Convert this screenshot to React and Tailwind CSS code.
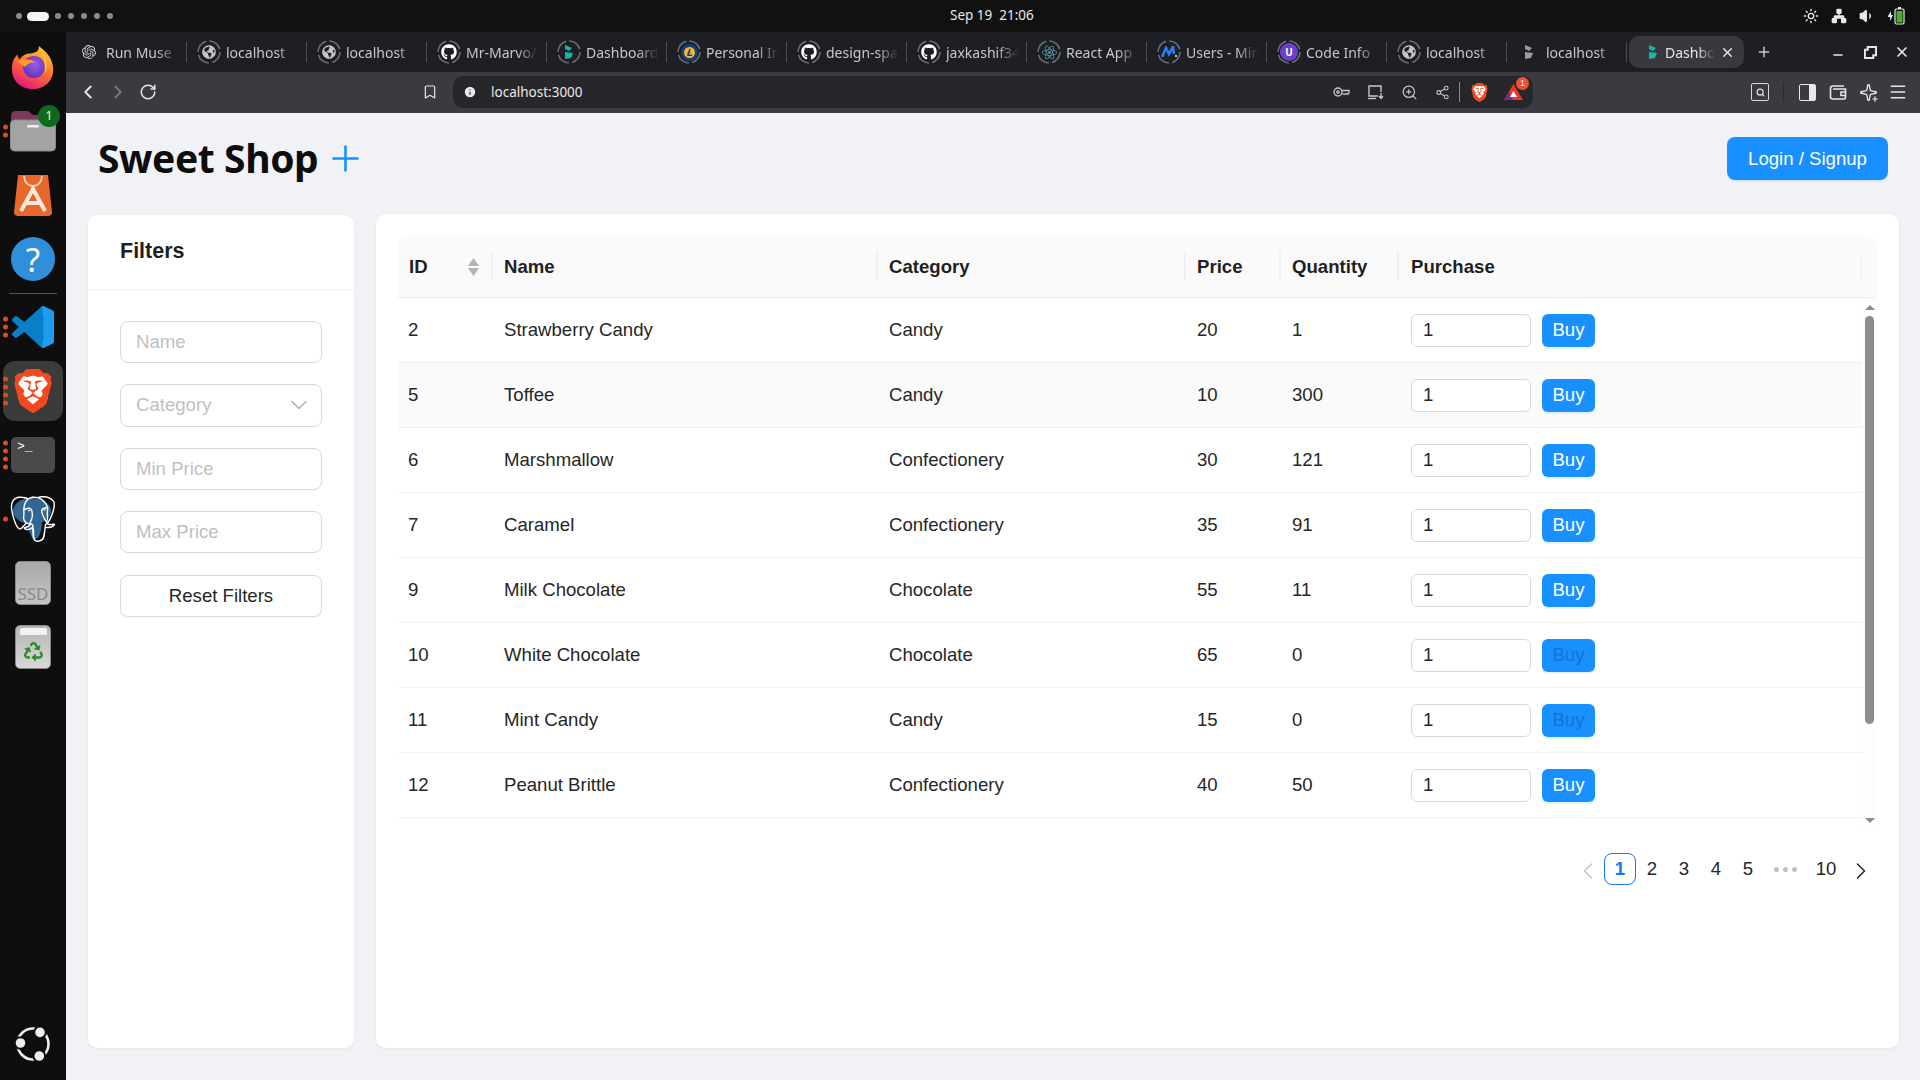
import {
  ChevronLeft,
  ChevronRight,
  ChevronDown,
  RotateCw,
  Bookmark,
  Info,
  ZoomIn,
  Share2,
  Plus,
  X,
  Minus,
  Sparkle,
  Menu,
  Volume1,
  Sun,
  Network,
  Search,
} from "lucide-react";
import { FaGithub, FaGlobeAmericas, FaRecycle } from "react-icons/fa";
import { SiBrave, SiOpenai, SiReact, SiPostgresql, SiLitecoin } from "react-icons/si";

const rows = [
  { id: 2, name: "Strawberry Candy", category: "Candy", price: 20, qty: 1 },
  { id: 5, name: "Toffee", category: "Candy", price: 10, qty: 300, hover: true },
  { id: 6, name: "Marshmallow", category: "Confectionery", price: 30, qty: 121 },
  { id: 7, name: "Caramel", category: "Confectionery", price: 35, qty: 91 },
  { id: 9, name: "Milk Chocolate", category: "Chocolate", price: 55, qty: 11 },
  { id: 10, name: "White Chocolate", category: "Chocolate", price: 65, qty: 0 },
  { id: 11, name: "Mint Candy", category: "Candy", price: 15, qty: 0 },
  { id: 12, name: "Peanut Brittle", category: "Confectionery", price: 40, qty: 50 },
];

const GlobeIcon = () => <FaGlobeAmericas className="text-[14px] text-[#c4c5c8]" />;
const GitIcon = () => <FaGithub className="text-[16px] text-white" />;
const DashIcon = ({ color = "#14b8a6" }) => (
  <svg width="12" height="16" viewBox="0 0 12 16">
    <path d="M2 1 L9 4 L6 7 L2 5 Z" fill={color} />
    <path d="M2 8 L10 9 L8 14 L2 15 Z" fill={color} />
  </svg>
);

const tabs = [
  { title: "Run Muse", icon: <SiOpenai className="text-[14px] text-[#d0d0d0]" />, plain: true },
  { title: "localhost", icon: <GlobeIcon /> },
  { title: "localhost", icon: <GlobeIcon /> },
  { title: "Mr-Marvo/", icon: <GitIcon /> },
  { title: "Dashboard", icon: <DashIcon /> },
  {
    title: "Personal In",
    icon: (
      <span className="flex h-[17px] w-[17px] items-center justify-center rounded-full bg-[#12407a]">
        <SiLitecoin className="text-[11px] text-[#f5b83d]" />
      </span>
    ),
  },
  { title: "design-spa", icon: <GitIcon /> },
  { title: "jaxkashif34", icon: <GitIcon /> },
  { title: "React App", icon: <SiReact className="text-[15px] text-[#4fa3b8]" /> },
  {
    title: "Users - Min",
    icon: (
      <svg width="16" height="12" viewBox="0 0 16 12">
        <path d="M1 11 L5 2 L8 8 L12 1 L13 8" fill="none" stroke="#2f7cf6" strokeWidth="2.6" />
        <circle cx="15" cy="10" r="1" fill="#fff" />
      </svg>
    ),
  },
  {
    title: "Code Info",
    icon: (
      <span className="flex h-[18px] w-[18px] items-center justify-center rounded-full bg-[#6d3fd1] text-[10px] font-bold text-white">
        U
      </span>
    ),
  },
  { title: "localhost", icon: <GlobeIcon /> },
  { title: "localhost", icon: <DashIcon color="#9a9a9a" />, plain: true },
];

const Ring = ({ children, plain }) => (
  <span className="relative flex h-6 w-6 shrink-0 items-center justify-center">
    {!plain && (
      <svg className="absolute inset-0" viewBox="0 0 24 24" fill="none">
        <circle cx="12" cy="12" r="11" stroke="#6b6c70" strokeWidth="1.6" strokeDasharray="14 3.3" />
      </svg>
    )}
    {children}
  </span>
);

const Tab = ({ title, icon, plain }) => (
  <div className="flex h-[40px] w-[120px] shrink-0 items-center gap-[5px] pl-[10px]">
    <Ring plain={plain}>{icon}</Ring>
    <span className="w-[73px] overflow-hidden whitespace-nowrap text-[14px] text-[#c6c7ca] [mask-image:linear-gradient(to_right,black_70%,transparent_100%)]">
      {title}
    </span>
    <span className="ml-auto h-[20px] w-px shrink-0 bg-[#4a4b50]" />
  </div>
);

const Firefox = () => (
  <svg width="46" height="46" viewBox="0 0 48 48">
    <defs>
      <linearGradient id="ffOuter" x1="0.8" y1="0" x2="0.3" y2="1">
        <stop offset="0" stopColor="#ffd53a" />
        <stop offset="0.45" stopColor="#ff7a2a" />
        <stop offset="1" stopColor="#e6157e" />
      </linearGradient>
      <radialGradient id="ffInner" cx="0.55" cy="0.4" r="0.7">
        <stop offset="0" stopColor="#9a5cf0" />
        <stop offset="1" stopColor="#5b2bb0" />
      </radialGradient>
    </defs>
    <path
      d="M30 2 C38 8 44 14 45 25 C46 38 36 47 24 47 C11 47 2 38 2 26 C2 20 4 14 8 11 C8 14 9 15 10 16 C13 12 16 10 21 10 C26 9 31 8 30 2 Z"
      fill="url(#ffOuter)"
    />
    <circle cx="25" cy="24" r="11.5" fill="url(#ffInner)" />
    <path d="M8 18 C14 16 22 15 26 19 C20 19 17 22 16 24 C13 22 10 21 8 18 Z" fill="#ff9a2e" />
    <path d="M33 9 C39 14 40 23 36 31 C37 22 36 15 33 9 Z" fill="#ffc53a" />
  </svg>
);

const Folder = () => (
  <svg width="46" height="42" viewBox="0 0 46 42">
    <path d="M1 6 Q1 1 6 1 H18 L23 5 H40 Q45 5 45 10 V20 H1 Z" fill="#7b3a55" />
    <rect x="0.5" y="10" width="45" height="31" rx="4" fill="#a3a3a3" />
    <rect x="0.5" y="10" width="45" height="31" rx="4" fill="none" stroke="#8a8a8a" />
    <rect x="17" y="15" width="12" height="2.5" rx="1.2" fill="#eeeeee" />
  </svg>
);

const Store = () => (
  <svg width="38" height="43" viewBox="0 0 38 43">
    <path d="M4 1 H34 L38 38 Q38 42 34 42 H4 Q0 42 0 38 Z" fill="#e9672c" />
    <path d="M10 2 Q11 12 19 12 Q27 12 28 2" fill="none" stroke="#f4d5c5" strokeWidth="1.8" />
    <path d="M7 37 L19 15 L31 37 M10 29 H28" fill="none" stroke="#fbe8de" strokeWidth="4" />
  </svg>
);

const VsCode = () => (
  <svg width="42" height="42" viewBox="0 0 100 100">
    <path
      d="M70.9 99.3a6.2 6.2 0 0 0 4.96-.19l20.6-9.9A6.25 6.25 0 0 0 100 83.58V16.42a6.25 6.25 0 0 0-3.54-5.63L75.86.88a6.23 6.23 0 0 0-7.1 1.21L29.35 38.04 12.18 25.01a4.16 4.16 0 0 0-5.32.24L1.36 30.25a4.17 4.17 0 0 0 0 6.16L16.25 50 1.36 63.59a4.17 4.17 0 0 0 0 6.16l5.5 5a4.16 4.16 0 0 0 5.32.24l17.17-13.03 39.41 35.95a6.2 6.2 0 0 0 2.14 1.39ZM75 27.3 45.1 50 75 72.7V27.3Z"
      fill="#0a7fc8"
    />
    <path
      d="M70.9 99.3a6.2 6.2 0 0 0 4.96-.19l20.6-9.9A6.25 6.25 0 0 0 100 83.58V16.42a6.25 6.25 0 0 0-3.54-5.63L75.86.88A6.2 6.2 0 0 0 70.9.7L75 27.3V72.7Z"
      fill="#1f9cf0"
    />
  </svg>
);

const Brave = ({ size }) => (
  <span className="relative flex items-center justify-center" style={{ width: size, height: size }}>
    <span className="absolute left-[15%] top-[12%] h-[70%] w-[70%] rounded-[30%] bg-white" />
    <SiBrave className="relative text-[#f4481f]" style={{ fontSize: size }} />
  </span>
);

const Elephant = () => (
  <span className="relative flex h-[48px] w-[46px] items-center justify-center">
    <span className="absolute left-[3px] top-[3px] h-[26px] w-[38px] rounded-[50%] bg-[#336791]" />
    <span className="absolute left-[18px] top-[10px] h-[34px] w-[14px] rounded-[50%] bg-[#336791]" />
    <SiPostgresql className="relative text-[48px] text-white" />
  </span>
);

const KeyIcon = () => (
  <svg width="17" height="12" viewBox="0 0 17 12" fill="none" stroke="#c6c7ca" strokeWidth="1.3">
    <circle cx="5" cy="6" r="4" />
    <circle cx="5" cy="6" r="1.2" />
    <path d="M9 4.5 H16 V7 L14.5 8.5 L13 7.5 L11.5 8.5 L9 7.5" />
  </svg>
);

const CastIcon = () => (
  <svg width="18" height="16" viewBox="0 0 18 16" fill="none" stroke="#c6c7ca" strokeWidth="1.4">
    <path d="M11 12 H2 V2 H14 V8" />
    <path d="M1 14.5 H9" />
    <path d="M14 9 V14 M12 12 L14 14.5 L16 12" />
  </svg>
);

const WalletIcon = () => (
  <svg width="18" height="18" viewBox="0 0 18 18" fill="none" stroke="#e8e8e8" strokeWidth="1.6">
    <path d="M15 3 H4 Q1.5 3 1.5 5.5 V14 Q1.5 16 4 16 H15 Q16.5 16 16.5 14 V6 H4" />
    <path d="M16.5 9 H12 V12.5 H16.5" />
  </svg>
);

const DockSlot = ({ running = 0, children }) => (
  <div className="relative flex h-[64px] w-[66px] items-center justify-center">
    {children}
    {running > 0 && (
      <div className="absolute left-[3px] top-1/2 flex -translate-y-1/2 flex-col gap-[3px]">
        {Array.from({ length: running }).map((_, i) => (
          <span key={i} className="h-[5px] w-[5px] rounded-full bg-[#d4501c]" />
        ))}
      </div>
    )}
  </div>
);

const Dock = () => (
  <aside className="flex w-[66px] shrink-0 flex-col bg-[#0e0e0e] pt-[3px]">
    <DockSlot>
      <Firefox />
    </DockSlot>
    <DockSlot running={2}>
      <Folder />
      <span className="absolute left-[38px] top-[6px] flex h-[22px] w-[22px] items-center justify-center rounded-full bg-[#0f6a1e] font-['Noto_Sans',sans-serif] text-[13px] text-[#f1f1c0]">
        1
      </span>
    </DockSlot>
    <DockSlot>
      <Store />
    </DockSlot>
    <DockSlot>
      <span className="flex h-[44px] w-[44px] items-center justify-center rounded-full bg-[#2f8fdb] font-['Noto_Sans',sans-serif] text-[33px] leading-none text-white">
        ?
      </span>
    </DockSlot>
    <div className="mx-[9px] mt-[2px] mb-px h-px bg-[#555555]" />
    <DockSlot running={3}>
      <VsCode />
    </DockSlot>
    <DockSlot running={4}>
      <span className="absolute left-[3px] top-[2px] h-[60px] w-[60px] rounded-[12px] bg-[#3b3b3b]" />
      <span className="relative">
        <Brave size={44} />
      </span>
    </DockSlot>
    <DockSlot running={4}>
      <div className="h-[36px] w-[44px] rounded-[5px] bg-[#4a4a4a] pl-[6px] font-['Liberation_Mono',monospace] text-[13px] leading-[20px] text-white">
        {">_"}
      </div>
    </DockSlot>
    <DockSlot running={1}>
      <Elephant />
    </DockSlot>
    <DockSlot>
      <div className="flex h-[44px] w-[36px] items-end justify-center rounded-[5px] border border-[#8a8a8a] bg-gradient-to-b from-[#a9a9a9] to-[#c4c4c4] pb-[2px] font-['Noto_Sans',sans-serif] text-[17px] leading-none text-[#8a8a8a]">
        SSD
      </div>
    </DockSlot>
    <DockSlot>
      <div className="flex h-[44px] w-[36px] flex-col items-center rounded-[5px] border border-[#8a8a8a] bg-gradient-to-b from-[#b5b5b5] to-[#d8d8d8]">
        <span className="mt-[2px] h-[7px] w-[27px] rounded-t-[2px] bg-[#f2f2f2]" />
        <FaRecycle className="mt-[7px] text-[19px] text-[#2d8a2d]" />
      </div>
    </DockSlot>
    <div className="mt-auto mb-[18px] flex justify-center">
      <svg width="36" height="36" viewBox="0 0 36 36" fill="none">
        <circle cx="18" cy="18" r="15.5" stroke="#eeeeee" strokeWidth="2.6" />
        <circle cx="5.5" cy="17" r="5.8" fill="#eeeeee" stroke="#0e0e0e" strokeWidth="2" />
        <circle cx="25" cy="6.4" r="5.8" fill="#eeeeee" stroke="#0e0e0e" strokeWidth="2" />
        <circle cx="24.3" cy="30" r="5.8" fill="#eeeeee" stroke="#0e0e0e" strokeWidth="2" />
      </svg>
    </div>
  </aside>
);

const TopBar = () => (
  <div className="relative flex h-[32px] shrink-0 items-center justify-between bg-[#111111] pl-[16px] pr-[15px]">
    <div className="flex items-center gap-[5px]">
      <span className="h-[6px] w-[6px] rounded-full bg-[#8c8c8c]" />
      <span className="h-[9px] w-[22px] rounded-full bg-[#f5f5f5]" />
      {[0, 1, 2, 3, 4].map((i) => (
        <span key={i} className="mx-[1px] h-[6px] w-[6px] rounded-full bg-[#8c8c8c]" />
      ))}
    </div>
    <div className="absolute left-[950px] top-[5px] whitespace-pre font-['Noto_Sans',sans-serif] text-[13.5px] text-[#e8e8e8]">
      Sep 19  21:06
    </div>
    <div className="flex items-center gap-[12px] text-[#e8e8e8]">
      <Sun size={16} />
      <Network size={16} fill="#e8e8e8" />
      <Volume1 size={16} fill="#e8e8e8" />
      <svg width="18" height="20" viewBox="0 0 18 20">
        <path d="M1 10 L4 5 V9 H6 L3 15 V11 H1 Z" fill="#e8e8e8" />
        <rect x="8" y="3" width="9" height="15" rx="1.5" fill="none" stroke="#e8e8e8" strokeWidth="1.2" />
        <rect x="11" y="1" width="3" height="2" fill="#e8e8e8" />
        <rect x="9.5" y="5" width="6" height="11.5" fill="#4caf2a" />
      </svg>
    </div>
  </div>
);

const TabBar = () => (
  <div className="flex h-[40px] shrink-0 items-center bg-[#1e1f24] pl-px font-['Noto_Sans',sans-serif]">
    {tabs.map((tab, i) => (
      <Tab key={i} {...tab} />
    ))}
    <div className="ml-[2px] flex h-[32px] w-[115px] shrink-0 items-center rounded-[10px] bg-[#38393f] pl-[12px]">
      <span className="flex w-[24px] justify-center">
        <DashIcon />
      </span>
      <span className="w-[50px] overflow-hidden whitespace-nowrap text-[14px] text-[#e6e6e6] [mask-image:linear-gradient(to_right,black_65%,transparent_100%)]">
        Dashboard
      </span>
      <X size={15} className="ml-[5px] text-[#e6e6e6]" strokeWidth={2.4} />
    </div>
    <Plus size={16} className="ml-[12px] text-[#c6c7ca]" strokeWidth={2.2} />
    <div className="ml-auto flex items-center gap-[17px] pr-[10px] text-[#e6e6e6]">
      <Minus size={14} strokeWidth={2.6} className="mr-[2px] mt-[6px]" />
      <svg width="13" height="13" viewBox="0 0 14 14">
        <path d="M4 1 H13 V10 H10 V13 H1 V4 H4 Z" fill="none" stroke="#e6e6e6" strokeWidth="2.2" />
      </svg>
      <X size={16} strokeWidth={2.6} />
    </div>
  </div>
);

const ToolBar = () => (
  <div className="flex h-[41px] shrink-0 items-center bg-[#3a3a40] pb-px pl-[11px] text-[#e8e8e8]">
    <ChevronLeft size={22} strokeWidth={2} />
    <ChevronRight size={22} strokeWidth={2} className="ml-[8px] text-[#77777c]" />
    <RotateCw size={18} strokeWidth={2} className="ml-[10px]" />
    <Bookmark size={16} strokeWidth={1.8} className="ml-[265px]" />
    <div className="ml-[15px] flex h-[32px] w-[1080px] items-center rounded-[10px] bg-[#26262b] pl-[10px]">
      <Info size={14} fill="#e8e8e8" stroke="#26262b" strokeWidth={2} />
      <span className="ml-[14px] font-['Noto_Sans',sans-serif] text-[13.5px]">localhost:3000</span>
      <div className="ml-auto flex items-center pr-[10px] text-[#c6c7ca]">
        <KeyIcon />
        <span className="ml-[17px]">
          <CastIcon />
        </span>
        <ZoomIn size={17} strokeWidth={1.7} className="ml-[16px]" />
        <Share2 size={15} strokeWidth={1.7} className="ml-[17px]" />
        <span className="ml-[9px] h-[20px] w-px bg-[#8a8a8a]" />
        <span className="ml-[10px]">
          <Brave size={19} />
        </span>
        <span className="relative ml-[15px] flex">
          <svg width="19" height="18" viewBox="0 0 19 18">
            <path d="M9.5 1 L19 17 H0 Z" fill="#e8392b" />
            <path d="M0 17 L5 9 L9 17 Z" fill="#7a2a90" />
            <path d="M9.5 8 L13 14 H6 Z" fill="#ffffff" />
          </svg>
          <span className="absolute -right-[6px] -top-[6px] flex h-[13px] w-[13px] items-center justify-center rounded-full bg-[#f0502e] text-[9px] text-white">
            1
          </span>
        </span>
      </div>
    </div>
    <div className="ml-[218px] flex h-[18px] w-[18px] items-center justify-center rounded-[2px] border-[1.5px] border-[#d8d8d8]">
      <Search size={9} strokeWidth={3} />
    </div>
    <span className="ml-[14px] h-[20px] w-px bg-[#2a2a2e]" />
    <div className="ml-[15px] flex h-[17px] w-[17px] justify-end rounded-[2px] border-[1.5px] border-[#e8e8e8]">
      <span className="h-full w-[6px] bg-[#e8e8e8]" />
    </div>
    <span className="ml-[13px]">
      <WalletIcon />
    </span>
    <span className="relative ml-[12px] flex">
      <Sparkle size={19} strokeWidth={1.7} />
      <Plus size={8} strokeWidth={3.5} className="absolute -bottom-[1px] -right-[1px]" />
    </span>
    <Menu size={20} strokeWidth={1.8} className="ml-[10px]" />
  </div>
);

const inputClass =
  "h-[42px] w-full rounded-[8px] border border-[#d9d9d9] bg-white px-[15px] text-[18.6px] text-[#262626] placeholder:text-[#bfbfbf] outline-none";

const Filters = () => (
  <section className="mt-px flex w-[266px] shrink-0 flex-col rounded-[10px] bg-white shadow-[0_1px_3px_rgba(0,0,0,0.05)]">
    <div className="flex h-[75px] items-center border-b border-[#f0f0f0] pb-[1px] pl-[32px] text-[21.5px] font-bold text-[#1f1f1f]">
      Filters
    </div>
    <div className="flex flex-col gap-[21px] px-[32px] pt-[31px]">
      <input className={inputClass} placeholder="Name" />
      <div className="flex h-[43px] items-center justify-between rounded-[8px] border border-[#d9d9d9] pb-px pl-[15px] pr-[8px] text-[18.6px] text-[#bfbfbf]">
        Category
        <ChevronDown size={28} strokeWidth={1.1} className="text-[#a8a8a8]" />
      </div>
      <input className={inputClass} placeholder="Min Price" />
      <input className={inputClass} placeholder="Max Price" />
      <button className="mt-px h-[42px] rounded-[8px] border border-[#d9d9d9] bg-white text-[18.6px] text-[#262626] shadow-[0_2px_0_rgba(0,0,0,0.02)]">
        Reset Filters
      </button>
    </div>
  </section>
);

const gridCols = "grid grid-cols-[95px_385px_308px_95px_118px_1fr]";

const HeadCell = ({ children, last }) => (
  <div
    className={`relative flex items-center justify-between pt-[1px] text-[18.6px] font-bold text-[#1f1f1f] ${
      last ? "pl-[12px]" : "px-[11px]"
    }`}
  >
    {children}
    <span
      className={`absolute right-0 top-[15px] h-[30px] bg-[#f0f0f0] ${last ? "w-px" : "w-[2px]"}`}
    />
  </div>
);

const Row = ({ row }) => (
  <div
    className={`${gridCols} h-[65px] items-center border-b border-[#f0f0f0] text-[18.6px] text-[#262626] ${
      row.hover ? "bg-[#fafafa]" : "bg-white"
    }`}
  >
    <div className="pl-[10px] pr-[11px]">{row.id}</div>
    <div className="px-[11px]">{row.name}</div>
    <div className="px-[11px]">{row.category}</div>
    <div className="px-[11px]">{row.price}</div>
    <div className="px-[11px]">{row.qty}</div>
    <div className="flex items-center gap-[11px] px-[12px]">
      <input
        readOnly
        value="1"
        className="h-[33px] w-[120px] rounded-[6px] border border-[#d9d9d9] bg-white px-[11px] text-[18.6px] text-[#262626] outline-none"
      />
      <button
        className={`h-[33px] w-[53px] rounded-[6px] bg-[#1890ff] text-[18.6px] shadow-[0_2px_0_rgba(5,145,255,0.1)] ${
          row.qty === 0 ? "text-[#1574d0]" : "text-white"
        }`}
      >
        Buy
      </button>
    </div>
  </div>
);

const Pagination = () => (
  <div className="mt-[23px] flex items-center justify-end text-[18.6px] text-[#262626]">
    <ChevronLeft size={28} strokeWidth={1.2} className="mr-[2px] mt-[3px] text-[#c4c4c4]" />
    <span className="flex h-[32px] w-[32px] items-center justify-center rounded-[8px] border border-[#1677ff] font-semibold text-[#1677ff]">
      1
    </span>
    {[2, 3, 4, 5].map((n) => (
      <span key={n} className="flex h-[32px] w-[32px] items-center justify-center">
        {n}
      </span>
    ))}
    <span className="flex w-[42px] items-center justify-center gap-[4px]">
      <span className="h-[5px] w-[5px] rounded-full bg-[#bfbfbf]" />
      <span className="h-[5px] w-[5px] rounded-full bg-[#bfbfbf]" />
      <span className="h-[5px] w-[5px] rounded-full bg-[#bfbfbf]" />
    </span>
    <span className="flex h-[32px] w-[40px] items-center justify-center">10</span>
    <ChevronRight size={28} strokeWidth={1.3} className="ml-px mr-[2px] mt-[3px] text-[#262626]" />
  </div>
);

const ProductTable = () => (
  <section className="flex flex-1 flex-col rounded-[10px] bg-white px-[22px] pt-[22px] shadow-[0_1px_4px_rgba(0,0,0,0.06)]">
    <div className="flex h-[62px] rounded-t-[10px] border-b border-[#f0f0f0] bg-[#fafafa] pr-[15px]">
      <div className={`${gridCols} h-full flex-1`}>
        <HeadCell>
          ID
          <span className="mr-[3px] flex flex-col gap-[2px]">
            <svg width="11" height="8" viewBox="0 0 11 8">
              <path d="M5.5 0 L11 8 H0 Z" fill="#b3b3b3" />
            </svg>
            <svg width="11" height="8" viewBox="0 0 11 8">
              <path d="M0 0 H11 L5.5 8 Z" fill="#b3b3b3" />
            </svg>
          </span>
        </HeadCell>
        <HeadCell>Name</HeadCell>
        <HeadCell>Category</HeadCell>
        <HeadCell>Price</HeadCell>
        <HeadCell>Quantity</HeadCell>
        <HeadCell last>Purchase</HeadCell>
      </div>
    </div>
    <div className="flex h-[532px]">
      <div className="flex-1">
        {rows.map((row) => (
          <Row key={row.id} row={row} />
        ))}
      </div>
      <div className="flex w-[15px] flex-col items-center bg-[#fdfdfd] pt-[7px]">
        <svg width="10" height="5" viewBox="0 0 10 5">
          <path d="M5 0 L10 5 H0 Z" fill="#8c8c8c" />
        </svg>
        <span className="mt-[6px] h-[408px] w-[9px] rounded-full bg-[#8c8c8c]" />
        <svg className="mb-[7px] mt-auto" width="10" height="5" viewBox="0 0 10 5">
          <path d="M0 0 H10 L5 5 Z" fill="#8c8c8c" />
        </svg>
      </div>
    </div>
    <Pagination />
  </section>
);

export default function App() {
  return (
    <div className="flex h-screen w-screen flex-col overflow-hidden bg-[#111111] font-['Liberation_Sans',Arial,sans-serif]">
      <TopBar />
      <div className="flex min-h-0 flex-1">
        <Dock />
        <div className="flex min-w-0 flex-1 flex-col">
          <TabBar />
          <ToolBar />
          <main className="flex min-h-0 flex-1 flex-col bg-[#f0f2f5]">
            <header className="flex h-[101px] shrink-0 items-start justify-between px-[32px] pt-[24px]">
              <div className="flex items-center gap-[7px]">
                <h1 className="-mt-[1px] font-['Noto_Sans',sans-serif] text-[39px] font-bold leading-[44px] tracking-[-0.4px] text-[#0d0d0d]">
                  Sweet Shop
                </h1>
                <Plus size={41} strokeWidth={1.5} className="text-[#1890ff]" />
              </div>
              <button className="h-[43px] w-[161px] rounded-[8px] bg-[#1890ff] pt-px text-[18.6px] text-white shadow-[0_2px_0_rgba(5,145,255,0.1)]">
                Login / Signup
              </button>
            </header>
            <div className="flex h-[834px] gap-[22px] pl-[22px] pr-[21px]">
              <Filters />
              <ProductTable />
            </div>
          </main>
        </div>
      </div>
    </div>
  );
}
